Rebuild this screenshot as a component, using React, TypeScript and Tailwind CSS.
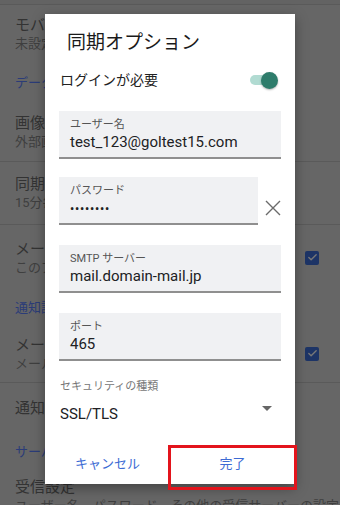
import { Check } from 'lucide-react'

const FONT = "font-['Roboto','Noto_Sans_CJK_JP',sans-serif]"

type Row =
  | { kind: 'header'; title: string; h: string }
  | { kind: 'item'; title: string; sub?: string; h: string; checked?: boolean; divider?: boolean }

const ROWS: Row[] = [
  { kind: 'item', title: 'モバイルネットワーク', sub: '未設定', h: 'h-[57px]' },
  { kind: 'header', title: 'データ使用量', h: 'h-[41px]' },
  { kind: 'item', title: '画像', sub: '外部画像を常に表示', h: 'h-[59px]', divider: true },
  { kind: 'item', title: '同期頻度', sub: '15分毎', h: 'h-[63px]', divider: true },
  { kind: 'item', title: 'メールを同期', sub: 'このアカウントのメールを同期', h: 'h-[65px]', checked: true },
  { kind: 'header', title: '通知設定', h: 'h-[35px]' },
  { kind: 'item', title: 'メール通知', sub: 'メール受信時に通知する', h: 'h-[58px]', checked: true, divider: true },
  { kind: 'item', title: '通知音を選択', h: 'h-[50px]' },
  { kind: 'header', title: 'サーバー設定', h: 'h-[38px]' },
  { kind: 'item', title: '受信設定', sub: 'ユーザー名、パスワード、その他の受信サーバーの設定', h: 'h-[50px]' },
]

function Background() {
  return (
    <div className="flex flex-col">
      <div className="h-[5px] border-b border-[#5a5a5a] bg-[#636363]" />
      {ROWS.map((r, i) =>
        r.kind === 'header' ? (
          <div key={i} className={`${r.h} flex items-center px-[15px] text-[13px] text-[#2b3c78]`}>
            {r.title}
          </div>
        ) : (
          <div
            key={i}
            className={`${r.h} flex items-center justify-between pl-[15px] pr-[21px] ${
              r.divider ? 'border-b border-[#5a5a5a]' : ''
            }`}
          >
            <div className="flex flex-col min-w-0">
              <span className="text-[15px] leading-[20px] text-[#333] whitespace-nowrap">{r.title}</span>
              {r.sub && (
                <span className="text-[13px] leading-[18px] text-[#3f3f3f] whitespace-nowrap">{r.sub}</span>
              )}
            </div>
            {r.checked && (
              <div className="w-[14px] h-[14px] rounded-[2px] bg-[#1d3466] flex items-center justify-center">
                <Check className="w-[11px] h-[11px] text-[#777]" strokeWidth={3} />
              </div>
            )}
          </div>
        )
      )}
    </div>
  )
}

function Field({ label, value, dots }: { label: string; value: string; dots?: boolean }) {
  return (
    <div className="h-[48px] bg-[#f0f1f3] border-b-2 border-[#8f8f8f] px-[11px] pt-[7px] flex flex-col">
      <span className="text-[11px] leading-[14px] text-[#555]">{label}</span>
      {dots ? (
        <span className="text-[12px] leading-[22px] tracking-[0.8px] font-medium text-[#222]">{value}</span>
      ) : (
        <span className="text-[15px] leading-[20px] text-[#202124] whitespace-nowrap">{value}</span>
      )}
    </div>
  )
}

function Dialog() {
  return (
    <div className="absolute left-[45px] top-[14px] w-[250px] h-[470px] bg-white shadow-[0_4px_12px_rgba(0,0,0,0.35)] flex flex-col">
      <div className="pt-[17px] pl-[22px] text-[19px] leading-[24px] text-[#1a1a1a]">同期オプション</div>

      <div className="mt-[13px] h-[24px] pl-[15px] pr-[17px] flex items-center justify-between">
        <span className="text-[14px] text-[#222]">ログインが必要</span>
        <div className="relative w-[28px] h-[17px] flex items-center">
          <div className="w-[26px] h-[10px] rounded-full bg-[#b1dbd2]" />
          <div className="absolute right-0 top-0 w-[17px] h-[17px] rounded-full bg-[#2e7c6b] shadow-[0_1px_2px_rgba(0,0,0,0.3)]" />
        </div>
      </div>

      <div className="mt-[19px] px-[14px] flex flex-col">
        <Field label="ユーザー名" value="test_123@goltest15.com" />
        <div className="mt-[18px] flex items-center">
          <div className="w-[199px]">
            <Field label="パスワード" value="••••••••" dots />
          </div>
          <svg className="ml-[7px] mt-[14px]" width="16" height="16" viewBox="0 0 16 16">
            <path d="M1 1 L15 15 M15 1 L1 15" stroke="#6b6b6b" strokeWidth="1.4" fill="none" />
          </svg>
        </div>
        <div className="mt-[20px]">
          <Field label="SMTP サーバー" value="mail.domain-mail.jp" />
        </div>
        <div className="mt-[20px]">
          <Field label="ポート" value="465" />
        </div>
      </div>

      <div className="mt-[19px] pl-[15px] text-[11px] leading-[14px] text-[#777]">セキュリティの種類</div>
      <div className="mt-[10px] pl-[15px] pr-[23px] flex items-start justify-between">
        <span className="text-[15px] leading-[20px] text-[#202124]">SSL/TLS</span>
        <svg className="mt-[2px]" width="10" height="6" viewBox="0 0 10 6">
          <path d="M0 0 L10 0 L5 5 Z" fill="#666" />
        </svg>
      </div>

      <div className="mt-auto h-[36px] grid grid-cols-2 mb-[2px]">
        <div className="flex items-center justify-center text-[13px] text-[#3d6bd4]">キャンセル</div>
        <div className="flex items-center justify-center text-[13px] text-[#3d6bd4]">完了</div>
      </div>
    </div>
  )
}

export default function App() {
  return (
    <div className={`relative w-[340px] h-[505px] overflow-hidden bg-[#666666] ${FONT}`}>
      <Background />
      <Dialog />
      {/* highlight box */}
      <div className="absolute left-[168px] top-[445px] w-[129px] h-[45px] border-[3px] border-[#e3141c]" />
    </div>
  )
}
